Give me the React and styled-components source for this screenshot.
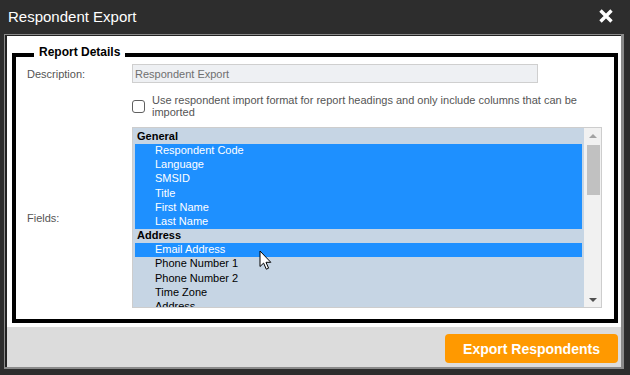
import React from "react";
import styled, { createGlobalStyle } from "styled-components";

const Global = createGlobalStyle`
  html, body { margin: 0; padding: 0; background: #2d2d2d; }
  body { font-family: "Liberation Sans", Arial, sans-serif; }
  * { box-sizing: border-box; }
`;

const Dialog = styled.div`
  width: 630px;
  height: 375px;
  background: #2d2d2d;
  display: flex;
  flex-direction: column;
  font-family: "Liberation Sans", Arial, sans-serif;
`;

const TitleBar = styled.div`
  height: 34px;
  flex: none;
  display: flex;
  align-items: center;
  justify-content: space-between;
  padding: 0 16px 2px 8px;
`;

const Title = styled.h1`
  margin: 0;
  font-size: 15px;
  font-weight: normal;
  color: #ffffff;
`;

const CloseButton = styled.button`
  width: 16px;
  height: 16px;
  padding: 0;
  border: none;
  background: none;
  display: flex;
  cursor: pointer;
`;

const Panel = styled.div`
  flex: 1;
  margin: 0 6px 6px 4px;
  border-style: solid;
  border-color: #8a8a8a;
  border-width: 1px 3px 2px 1px;
  display: flex;
`;

const PanelInner = styled.div`
  flex: 1;
  background: #ffffff;
  border-top: 1px solid #222;
  border-left: 2px solid #222;
  display: flex;
  flex-direction: column;
`;

const Fieldset = styled.fieldset`
  margin: 9px 3px 4px 5px;
  padding: 0 0 11px 11px;
  border: 4px solid #000;
  min-width: 0;
`;

const Legend = styled.legend`
  margin-left: 7px;
  padding: 0 5px 5px 5px;
  font-size: 12px;
  line-height: 14px;
  font-weight: bold;
  color: #000;
`;

const FormRow = styled.div`
  display: grid;
  grid-template-columns: 105px auto;
  align-items: center;
  margin-top: ${(p) => p.$gap || 0}px;
`;

const Label = styled.label`
  font-size: 11px;
  color: #555;
`;

const TextInput = styled.input`
  width: 406px;
  height: 19px;
  margin: 0;
  padding: 0 2px;
  border: 1px solid #cfcfcf;
  background: #eef0f3;
  color: #6f6f6f;
  font-family: "Liberation Sans", Arial, sans-serif;
  font-size: 11px;
  outline: none;
`;

const CheckWrap = styled.label`
  display: flex;
  align-items: center;
  gap: 7px;
  width: 470px;
`;

const Checkbox = styled.input`
  appearance: none;
  flex: none;
  width: 13px;
  height: 13px;
  margin: 0;
  border: 1px solid #606060;
  border-radius: 3px;
  background: #fff;
`;

const CheckText = styled.span`
  width: 450px;
  font-size: 11px;
  line-height: 12px;
  color: #555;
`;

const ListBox = styled.div`
  position: relative;
  width: 470px;
  height: 181px;
  border: 1px solid #cdcdcd;
  background: #c6d5e4;
  display: flex;
`;

const ListItems = styled.div`
  flex: 1;
  padding: 2px 2px 0 2px;
  overflow: hidden;
`;

const GroupLabel = styled.div`
  height: 14.17px;
  line-height: 13px;
  padding-left: 2px;
  font-size: 11px;
  font-weight: bold;
  color: #000;
  white-space: nowrap;
`;

const Option = styled.div`
  height: 14.17px;
  line-height: 13px;
  padding-left: 20px;
  font-size: 11px;
  white-space: nowrap;
  color: ${(p) => (p.$selected ? "#ffffff" : "#000000")};
  background: ${(p) => (p.$selected ? "#1e90ff" : "transparent")};
`;

const Scrollbar = styled.div`
  width: 17px;
  flex: none;
  background: #f1f1f1;
  display: flex;
  flex-direction: column;
  align-items: center;
`;

const ScrollArrow = styled.div`
  height: 17px;
  width: 100%;
  display: flex;
  align-items: center;
  justify-content: center;
  &::before {
    content: "";
    width: 0;
    height: 0;
    border-left: 4px solid transparent;
    border-right: 4px solid transparent;
    ${(p) =>
      p.$dir === "up"
        ? "border-bottom: 4px solid #a3a3a3; margin-top: -1px;"
        : "border-top: 4px solid #505050; margin-top: 2px;"}
  }
`;

const Thumb = styled.div`
  width: 13px;
  height: 50px;
  margin-left: 1px;
  background: #c1c1c1;
`;

const Spacer = styled.div`
  flex: 1;
`;

const Footer = styled.div`
  height: 40px;
  flex: none;
  background: #dcdcdc;
  display: flex;
  justify-content: flex-end;
  align-items: flex-start;
  padding: 7px 3px 0 0;
`;

const ExportButton = styled.button`
  width: 173px;
  height: 29px;
  border: none;
  border-radius: 4px;
  background: #ff9900;
  color: #fff;
  font-family: "Liberation Sans", Arial, sans-serif;
  font-size: 14px;
  font-weight: bold;
  cursor: pointer;
`;

const Cursor = styled.svg`
  position: absolute;
  left: 126px;
  top: 122px;
  pointer-events: none;
`;

const groups = [
  {
    label: "General",
    items: [
      { t: "Respondent Code", sel: true },
      { t: "Language", sel: true },
      { t: "SMSID", sel: true },
      { t: "Title", sel: true },
      { t: "First Name", sel: true },
      { t: "Last Name", sel: true },
    ],
  },
  {
    label: "Address",
    items: [
      { t: "Email Address", sel: true },
      { t: "Phone Number 1" },
      { t: "Phone Number 2" },
      { t: "Time Zone" },
      { t: "Address" },
    ],
  },
];

export default function App() {
  return (
    <>
      <Global />
      <Dialog>
        <TitleBar>
          <Title>Respondent Export</Title>
          <CloseButton aria-label="Close">
            <svg width="16" height="16" viewBox="0 0 16 16">
              <path d="M2.5 2.5 L13.5 13.5 M13.5 2.5 L2.5 13.5" stroke="#fff" strokeWidth="3.4" />
            </svg>
          </CloseButton>
        </TitleBar>
        <Panel>
          <PanelInner>
            <Fieldset>
              <Legend>Report Details</Legend>
              <FormRow>
                <Label>Description:</Label>
                <TextInput readOnly value="Respondent Export" />
              </FormRow>
              <FormRow $gap={11}>
                <span />
                <CheckWrap>
                  <Checkbox type="checkbox" />
                  <CheckText>
                    Use respondent import format for report headings and only include columns that can be imported
                  </CheckText>
                </CheckWrap>
              </FormRow>
              <FormRow $gap={9}>
                <Label>Fields:</Label>
                <ListBox>
                  <ListItems>
                    {groups.map((g) => (
                      <React.Fragment key={g.label}>
                        <GroupLabel>{g.label}</GroupLabel>
                        {g.items.map((it) => (
                          <Option key={it.t} $selected={it.sel}>
                            {it.t}
                          </Option>
                        ))}
                      </React.Fragment>
                    ))}
                  </ListItems>
                  <Scrollbar>
                    <ScrollArrow $dir="up" />
                    <Thumb />
                    <Spacer />
                    <ScrollArrow $dir="down" />
                  </Scrollbar>
                  <Cursor width="14" height="21" viewBox="0 0 14 21">
                    <path
                      d="M1 1 L1 16.5 L4.6 13.1 L7.3 19.2 L9.6 18.2 L7 12.3 L11.8 12.3 Z"
                      fill="#fff"
                      stroke="#000"
                      strokeWidth="1"
                      strokeLinejoin="miter"
                    />
                  </Cursor>
                </ListBox>
              </FormRow>
            </Fieldset>
            <Spacer />
            <Footer>
              <ExportButton>Export Respondents</ExportButton>
            </Footer>
          </PanelInner>
        </Panel>
      </Dialog>
    </>
  );
}
